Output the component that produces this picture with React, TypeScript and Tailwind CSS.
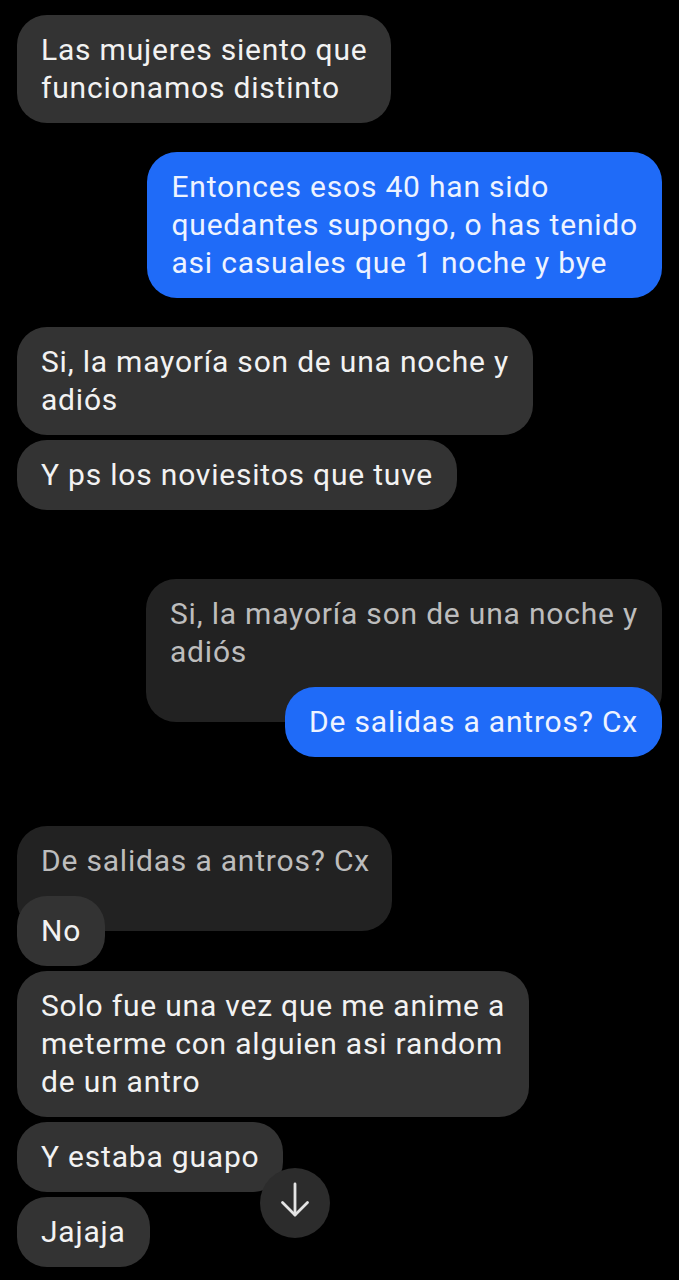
type Msg = { lines: string[] };

const Bubble = ({ lines, mine = false }: Msg & { mine?: boolean }) => (
  <div
    className={
      mine
        ? "self-end rounded-[30px] bg-[#1f6bf8] px-6 py-4 text-[#eef3ff]"
        : "self-start rounded-[30px] bg-[#333333] px-6 py-4 text-[#f2f2f2]"
    }
  >
    {lines.map((l, i) => (
      <p key={i} className="whitespace-nowrap">
        {l}
      </p>
    ))}
  </div>
);

const Quote = ({ lines, right = false }: Msg & { right?: boolean }) => (
  <div
    className={
      "rounded-[30px] bg-[#222222] px-6 pt-4 pb-[51px] text-[#bdbdbd] " +
      (right ? "self-end w-[516px]" : "self-start w-[375px]")
    }
  >
    {lines.map((l, i) => (
      <p key={i} className="whitespace-nowrap">
        {l}
      </p>
    ))}
  </div>
);

export default function App() {
  return (
    <div
      className="relative min-h-[1280px] w-full bg-black px-[17px] pt-[15px] text-[30px] leading-[38px] tracking-[0.8px]"
      style={{ fontFamily: "Roboto, 'Noto Sans', sans-serif" }}
    >
      <div className="flex flex-col">
        <Bubble lines={["Las mujeres siento que", "funcionamos distinto"]} />
        <div className="mt-[29px] flex flex-col">
          <Bubble
            mine
            lines={[
              "Entonces esos 40 han sido",
              "quedantes supongo, o has tenido",
              "asi casuales que 1 noche y bye",
            ]}
          />
        </div>
        <div className="mt-[29px] flex flex-col gap-[5px]">
          <Bubble lines={["Si, la mayoría son de una noche y", "adiós"]} />
          <Bubble lines={["Y ps los noviesitos que tuve"]} />
        </div>

        <div className="mt-[69px] flex flex-col">
          <Quote right lines={["Si, la mayoría son de una noche y", "adiós"]} />
          <div className="-mt-[35px] flex flex-col">
            <Bubble mine lines={["De salidas a antros? Cx"]} />
          </div>
        </div>

        <div className="mt-[69px] flex flex-col">
          <Quote lines={["De salidas a antros? Cx"]} />
          <div className="-mt-[35px] flex flex-col gap-[5px]">
            <Bubble lines={["No"]} />
            <Bubble
              lines={[
                "Solo fue una vez que me anime a",
                "meterme con alguien asi random",
                "de un antro",
              ]}
            />
            <Bubble lines={["Y estaba guapo"]} />
            <Bubble lines={["Jajaja"]} />
          </div>
        </div>
      </div>

      {/* scroll to bottom */}
      <button className="absolute left-[260px] top-[1168px] flex h-[70px] w-[70px] items-center justify-center rounded-full bg-[#2c2c2c]">
        <svg
          width="36"
          height="36"
          viewBox="0 0 36 36"
          fill="none"
          stroke="#e4e4e4"
          strokeWidth="2.8"
          strokeLinecap="round"
          strokeLinejoin="round"
          className="-mt-[6px]"
        >
          <path d="M18 2v31" />
          <path d="M5.5 20.5 18 33l12.5-12.5" />
        </svg>
      </button>
    </div>
  );
}
